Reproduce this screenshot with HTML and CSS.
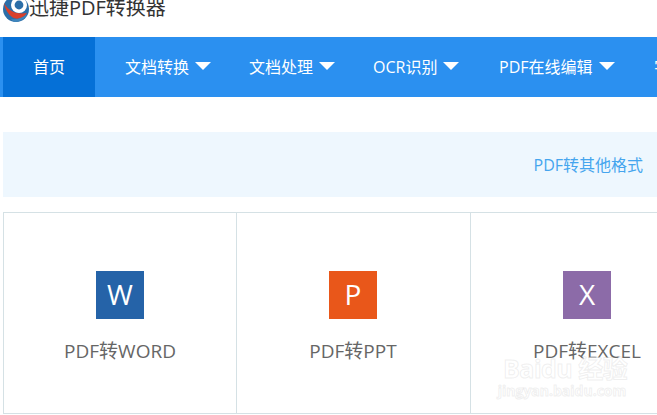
FILE: index.html
```html
<!DOCTYPE html>
<html lang="zh-CN">
<head>
<meta charset="utf-8">
<title>迅捷PDF转换器</title>
<link rel="stylesheet" href="styles.css">
</head>
<body>
<header class="brand">
  <svg class="logo" width="26" height="22" viewBox="0 0 26 22" aria-hidden="true">
    <circle cx="13" cy="9" r="13" fill="#2b6ea8"/>
    <circle cx="16" cy="5" r="8" fill="#fff"/>
    <circle cx="16" cy="5" r="4.4" fill="#2b6ea8"/>
    <path d="M1 3 C5 10 12 15 24 13 C20 19 13 20 9 17 C5 14 2 9 1 3Z" fill="#d9402b"/>
    <path d="M8 19 C14 20 20 18 24 14 C23 18 18 21 13 22 C11 22 9 21 8 19Z" fill="#3f86bd"/>
  </svg>
  <span class="brand-name">迅捷PDF转换器</span>
</header>
<nav class="nav">
  <a class="nav-home">首页</a>
  <a class="nav-item nav-w1">文档转换<i class="caret"></i></a>
  <a class="nav-item nav-w2">文档处理<i class="caret"></i></a>
  <a class="nav-item nav-w3">OCR识别<i class="caret"></i></a>
  <a class="nav-item nav-w4">PDF在线编辑<i class="caret"></i></a>
  <a class="nav-item">字</a>
</nav>
<section class="panel"><span class="panel-link">PDF转其他格式</span></section>
<section class="cards">
  <div class="card">
    <div class="tile tile-word">W</div>
    <div class="card-label">PDF转WORD</div>
  </div>
  <div class="card">
    <div class="tile tile-ppt">P</div>
    <div class="card-label">PDF转PPT</div>
  </div>
  <div class="card">
    <div class="tile tile-excel">X</div>
    <div class="card-label">PDF转EXCEL</div>
  </div>
</section>
<div class="watermark">
  <div class="wm-main">Baidu 经验</div>
  <div class="wm-sub">jingyan.baidu.com</div>
</div>
</body>
</html>
```

FILE: styles.css
```css
* { box-sizing: border-box; }
html, body { margin: 0; padding: 0; }
body {
  width: 657px;
  height: 415px;
  overflow: hidden;
  position: relative;
  background: #fff;
  font-family: "Open Sans", "Noto Sans CJK SC", sans-serif;
}
.brand {
  height: 37px;
  display: flex;
  align-items: flex-start;
  padding-left: 3px;
  overflow: hidden;
}
.logo { flex: none; }
.brand-name {
  font-size: 20px;
  line-height: 16px;
  color: #333;
  white-space: nowrap;
}
.nav {
  height: 60px;
  display: flex;
  align-items: stretch;
  padding-left: 3px;
  background: #2b90f0;
  color: #fff;
  font-size: 16px;
  white-space: nowrap;
  overflow: hidden;
}
.nav-home {
  flex: none;
  width: 92px;
  display: flex;
  align-items: center;
  justify-content: center;
  padding-bottom: 2px;
  background: #0570d7;
}
.nav-item {
  flex: none;
  display: flex;
  align-items: center;
  padding-left: 30px;
  padding-bottom: 2px;
}
.nav-w1 { width: 124px; }
.nav-w2 { width: 124px; }
.nav-w3 { width: 126px; }
.nav-w4 { width: 155px; }
.caret {
  margin-left: 6px;
  width: 0;
  height: 0;
  border-left: 8px solid transparent;
  border-right: 8px solid transparent;
  border-top: 8px solid #fff;
}
.panel {
  margin: 35px 0 0 3px;
  height: 65px;
  display: flex;
  align-items: center;
  justify-content: flex-end;
  padding: 0 14px 2px 0;
  background: #eef7fe;
}
.panel-link { font-size: 16px; color: #45a5ee; }
.cards {
  margin: 15px 0 0 3px;
  display: grid;
  grid-template-columns: 233px 234px 234px;
  height: 202px;
  border-top: 1px solid #d5e1e5;
  border-bottom: 1px solid #d5e1e5;
  border-left: 1px solid #d5e1e5;
}
.card {
  display: flex;
  flex-direction: column;
  align-items: center;
  padding-top: 58px;
  border-right: 1px solid #d5e1e5;
}
.card + .card { padding-right: 1px; }
.tile {
  width: 48px;
  height: 48px;
  display: flex;
  align-items: center;
  justify-content: center;
  padding-bottom: 2px;
  color: #fff;
  font-size: 28px;
  font-weight: 400;
}
.tile-word { background: #2563a8; }
.tile-ppt { background: #e9571a; }
.tile-excel { background: #8c6ba8; }
.card-label {
  margin-top: 19px;
  font-size: 19px;
  line-height: 26px;
  color: #666;
}
.watermark {
  position: absolute;
  left: 503px;
  top: 353px;
  width: 118px;
  text-align: center;
  color: rgba(255,255,255,.6);
  -webkit-text-stroke: 1px rgba(200,200,200,.28);
  font-weight: 700;
  pointer-events: none;
}
.wm-main { font-size: 25px; line-height: 30px; white-space: nowrap; letter-spacing: -0.5px; }
.wm-sub { font-size: 14px; line-height: 16px; white-space: nowrap; display: flex; justify-content: center; }
```
